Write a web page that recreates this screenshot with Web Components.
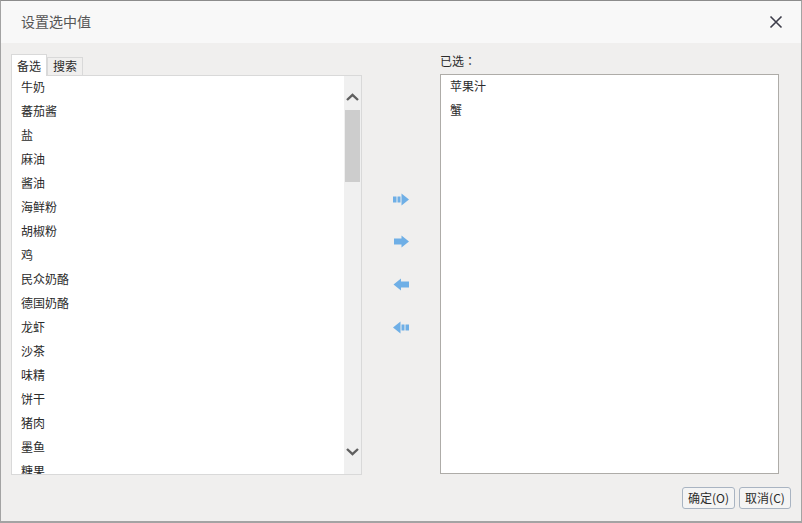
<!DOCTYPE html>
<html>
<head>
<meta charset="utf-8">
<style>
  html, body { margin: 0; padding: 0; height: 100%; overflow: hidden; background: #f0efee; }
  body { font-family: "Noto Sans CJK SC", "Liberation Sans", sans-serif; font-size: 12px; color: #333; }
</style>
</head>
<body>
<set-dialog title-text="设置选中值">
  <div slot="left" style="display:contents">
    <tab-panel>
      <pick-list scroll items="牛奶,蕃茄酱,盐,麻油,酱油,海鲜粉,胡椒粉,鸡,民众奶酪,德国奶酪,龙虾,沙茶,味精,饼干,猪肉,墨鱼,糖果"></pick-list>
    </tab-panel>
  </div>
  <div slot="middle" style="display:contents">
    <move-btn kind="all-right"></move-btn>
    <move-btn kind="right"></move-btn>
    <move-btn kind="left"></move-btn>
    <move-btn kind="all-left"></move-btn>
  </div>
  <div slot="right" style="display:contents">
    <selected-panel>
      <pick-list items="苹果汁,蟹"></pick-list>
    </selected-panel>
  </div>
  <div slot="footer" style="display:contents">
    <dlg-btn style="width:53px">确定(O)</dlg-btn>
    <dlg-btn>取消(C)</dlg-btn>
  </div>
</set-dialog>

<script>
//ventana del dialogo
class SetDialog extends HTMLElement {
  connectedCallback() {
    let root = this.attachShadow({ mode: 'open' });
    root.innerHTML = `
      <style>
        :host { display: flex; flex-direction: column; box-sizing: border-box; width: 802px; height: 523px;
          border: 1px solid #a3a3a3; border-width: 1px 1px 2px 1px; border-top-color: #8c8c8c; background: #f0efee; }
        .head { flex: none; height: 42px; display: flex; align-items: center; justify-content: space-between;
          background: #f8f8f8; padding: 0 18px 0 20px; font-size: 14px; color: #555; }
        .head span { margin-top: -2px; }
        .head svg { display: block; }
        .body { flex: none; height: 432px; display: flex; padding: 11px 22px 0 10px; box-sizing: border-box; }
        .left { flex: none; width: 351px; }
        .middle { flex: none; width: 78px; display: flex; flex-direction: column; align-items: center;
          padding-top: 139px; box-sizing: border-box; gap: 0; }
        .right { flex: none; width: 339px; }
        .foot { flex: none; display: flex; justify-content: flex-end; gap: 4px; padding: 12px 10px 0 0; }
      </style>
      <div class="head">
        <span>${this.getAttribute('title-text')}</span>
        <svg width="14" height="14" viewBox="0 0 14 14"><path d="M1.5 1.5 L12.5 12.5 M12.5 1.5 L1.5 12.5" stroke="#3d3d4a" stroke-width="1.6" fill="none"/></svg>
      </div>
      <div class="body">
        <div class="left"><slot name="left"></slot></div>
        <div class="middle"><slot name="middle"></slot></div>
        <div class="right"><slot name="right"></slot></div>
      </div>
      <div class="foot"><slot name="footer"></slot></div>`;
  }
}

//panel con las pestañas 备选 / 搜索
class TabPanel extends HTMLElement {
  connectedCallback() {
    let root = this.attachShadow({ mode: 'open' });
    root.innerHTML = `
      <style>
        :host { display: block; }
        .tabs { display: flex; height: 21px; align-items: flex-end; position: relative; z-index: 1; }
        .tab { box-sizing: border-box; border: 1px solid #d9d9d9; border-bottom: 0; text-align: center; color: #2b2b2b; }
        .on { width: 36px; line-height: 21px; background: #fff; margin-bottom: -1px; height: 22px; }
        .off { width: 36px; height: 18px; line-height: 16px; background: #f0efee; }
        .box { box-sizing: border-box; height: 400px; border: 1px solid #d9d9d9; background: #fff; overflow: hidden; }
      </style>
      <div class="tabs"><div class="tab on">备选</div><div class="tab off">搜索</div></div>
      <div class="box"><slot></slot></div>`;
  }
}

//panel de la derecha con su etiqueta
class SelectedPanel extends HTMLElement {
  connectedCallback() {
    let root = this.attachShadow({ mode: 'open' });
    root.innerHTML = `
      <style>
        :host { display: block; }
        .label { height: 20px; line-height: 14px; color: #2b2b2b; }
        .label span { font-family: "Noto Sans CJK TC", sans-serif; }
        .box { box-sizing: border-box; height: 400px; border: 1px solid #aeaca8; background: #fff; overflow: hidden; }
      </style>
      <div class="label">已选<span>：</span></div>
      <div class="box"><slot></slot></div>`;
  }
}

//lista de valores, con barra de scroll dibujada si lleva "scroll"
class PickList extends HTMLElement {
  connectedCallback() {
    let root = this.attachShadow({ mode: 'open' });
    let items = this.getAttribute('items').split(',');
    let bar = this.hasAttribute('scroll') ? `
      <div class="bar">
        <svg class="arrow" width="13" height="8" viewBox="0 0 13 8"><path d="M1 7 L6.5 1.8 L12 7" stroke="#5f5f5f" stroke-width="2.4" fill="none"/></svg>
        <div class="thumb"></div>
        <div class="rest"></div>
        <svg class="arrow" width="13" height="8" viewBox="0 0 13 8"><path d="M1 1 L6.5 6.2 L12 1" stroke="#5f5f5f" stroke-width="2.4" fill="none"/></svg>
      </div>` : '';
    root.innerHTML = `
      <style>
        :host { display: flex; height: 100%; overflow: hidden; }
        ul { flex: 1; list-style: none; margin: -1px 0 0; padding: 0 0 0 9px; overflow: hidden; }
        li { height: 24px; line-height: 24px; color: #2b2b2b; }
        .bar { flex: none; width: 17px; background: #f0f0f0; display: flex; flex-direction: column; align-items: center;
          padding: 17px 0 18px; box-sizing: border-box; }
        .arrow { flex: none; display: block; }
        .thumb { flex: none; width: 15px; height: 72px; background: #cdcdcd; margin-top: 9px; }
        .rest { flex: 1; }
      </style>
      <ul>${items.map(t => `<li>${t}</li>`).join('')}</ul>${bar}`;
  }
}

//botones con flecha azul
class MoveBtn extends HTMLElement {
  connectedCallback() {
    let root = this.attachShadow({ mode: 'open' });
    let shapes = {
      'all-right': '<path d="M0 3h3.5v6H0zM4.5 3h3v6h-3zM8.5 0 L16 6 L8.5 12z"/>',
      'right': '<path d="M1 3h7.5V0 L16 6 L8.5 12V9H1z"/>',
      'left': '<path d="M16 3H8V0 L0.5 6 L8 12V9h8z"/>',
      'all-left': '<path d="M16 3h-3.5v6H16zM11.5 3h-3v6h3zM7.5 0 L0 6 L7.5 12z"/>'
    };
    root.innerHTML = `
      <style>
        :host { display: flex; height: 43px; align-items: flex-start; justify-content: center; }
        :host(:first-child) { height: 42px; }
        svg { display: block; }
      </style>
      <svg width="16" height="13" viewBox="0 0 16 12" fill="#6fafe6">${shapes[this.getAttribute('kind')]}</svg>`;
  }
}

//boton de abajo
class DlgBtn extends HTMLElement {
  connectedCallback() {
    let root = this.attachShadow({ mode: 'open' });
    root.innerHTML = `
      <style>
        :host { display: block; box-sizing: border-box; width: 52px; height: 22px; line-height: 20px; text-align: center;
          border: 1px solid #a9b4c2; border-radius: 3px; background: #f4f4f4; color: #2b2b2b; font-size: 12px; }
      </style>
      <slot></slot>`;
  }
}

window.customElements.define('set-dialog', SetDialog);
window.customElements.define('tab-panel', TabPanel);
window.customElements.define('selected-panel', SelectedPanel);
window.customElements.define('pick-list', PickList);
window.customElements.define('move-btn', MoveBtn);
window.customElements.define('dlg-btn', DlgBtn);
</script>
</body>
</html>
